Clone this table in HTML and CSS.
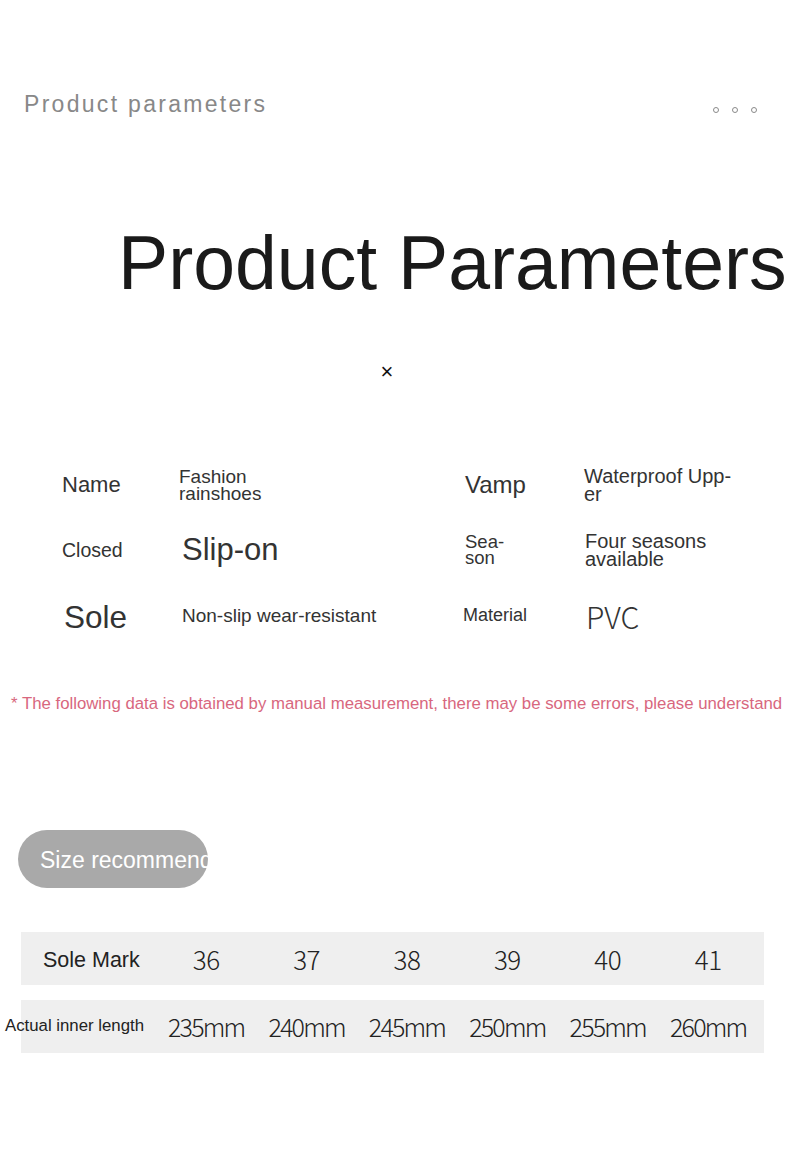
FILE: index.html
```html
<!DOCTYPE html>
<html>
<head>
<meta charset="utf-8">
<link rel="stylesheet" href="styles.css">
</head>
<body>
<div class="page">
  <header class="top">
    <div class="subtitle">Product parameters</div>
    <div class="dots"><span class="dot"></span><span class="dot"></span><span class="dot"></span></div>
  </header>

  <h1 class="title">Product Parameters</h1>

  <div class="close">×</div>

  <div class="params">
    <div class="cell k name">Name</div>
    <div class="cell v tight fashion">Fashion<br>rainshoes</div>
    <div class="cell k vamp">Vamp</div>
    <div class="cell v tight water">Waterproof Upp-<br>er</div>

    <div class="cell k closed">Closed</div>
    <div class="cell v slip">Slip-on</div>
    <div class="cell k tight season">Sea-<br>son</div>
    <div class="cell v tight four">Four seasons<br>available</div>

    <div class="cell k sole">Sole</div>
    <div class="cell v nonslip">Non-slip wear-resistant</div>
    <div class="cell k material">Material</div>
    <div class="cell v pvc">PVC</div>
  </div>

  <p class="note">* The following data is obtained by manual measurement, there may be some errors, please understand</p>

  <div class="pill"><span class="pill-text">Size recommendation</span></div>

  <div class="sizes">
    <div class="row">
      <div class="label mark">Sole Mark</div>
      <div class="num">36</div><div class="num">37</div><div class="num">38</div>
      <div class="num">39</div><div class="num">40</div><div class="num">41</div>
    </div>
    <div class="row">
      <div class="label inner">Actual inner length</div>
      <div class="num mm">235mm</div><div class="num mm">240mm</div><div class="num mm">245mm</div>
      <div class="num mm">250mm</div><div class="num mm">255mm</div><div class="num mm">260mm</div>
    </div>
  </div>
</div>
</body>
</html>
```

FILE: styles.css
```css
html, body {
  margin: 0;
  padding: 0;
  background: #ffffff;
}
.page {
  width: 790px;
  height: 1152px;
  overflow: hidden;
  font-family: "Liberation Sans", Arial, sans-serif;
  color: #333333;
}
.top {
  display: flex;
  justify-content: space-between;
  align-items: center;
  padding: 90px 33px 0 24px;
}
.subtitle {
  font-size: 23px;
  letter-spacing: 2.3px;
  color: #888888;
  line-height: 28px;
}
.dots {
  display: flex;
  gap: 13px;
  padding-top: 12px;
}
.dot {
  width: 4px;
  height: 4px;
  border: 1px solid #8a8a8a;
  border-radius: 50%;
}
.title {
  margin: 0;
  padding: 102px 0 0 118px;
  font-size: 75.2px;
  font-weight: normal;
  line-height: 86px;
  color: #1a1a1a;
  white-space: nowrap;
}
.close {
  margin-top: 55px;
  text-align: center;
  font-size: 22px;
  line-height: 22px;
  color: #111;
  padding-right: 16px;
}
.params {
  margin-top: 69px;
  display: grid;
  grid-template-columns: 117px 284px 120px 1fr;
  grid-auto-rows: 65.5px;
  padding-left: 62px;
  align-items: center;
}
.cell { white-space: nowrap; }
.tight { line-height: 0.9; }
.name { font-size: 22px; }
.fashion { font-size: 19px; }
.vamp { font-size: 24px; padding-left: 2px; }
.water { font-size: 20px; padding-left: 1px; }
.closed { font-size: 19.5px; }
.slip { font-size: 31px; padding-left: 3px; }
.season { font-size: 18.5px; padding-left: 2px; }
.four { font-size: 20px; padding-left: 2px; }
.sole { font-size: 31.5px; padding-left: 2px; padding-top: 4px; }
.nonslip { font-size: 19px; padding-left: 3px; }
.material { font-size: 18px; }
.pvc {
  font-family: "Noto Sans CJK SC", "Noto Sans", sans-serif;
  font-weight: 300;
  font-size: 30px;
  padding-left: 3px;
  color: #333;
}
.note {
  margin: 45px 0 0 11px;
  font-size: 16.8px;
  line-height: 20px;
  color: #d8677e;
  white-space: nowrap;
}
.pill {
  margin: 116px 0 0 18px;
  width: 190px;
  height: 58px;
  border-radius: 29px;
  background: #a9a9a9;
  display: flex;
  align-items: center;
  padding-left: 22px;
  box-sizing: border-box;
}
.pill-text {
  color: #ffffff;
  font-size: 23px;
  white-space: nowrap;
  padding-top: 3px;
}
.sizes {
  margin: 44px 0 0 21px;
  width: 743px;
  display: flex;
  flex-direction: column;
  gap: 15px;
}
.row {
  height: 53px;
  background: #efefef;
  display: grid;
  grid-template-columns: 135px repeat(6, 100.4px);
  align-items: center;
}
.label {
  color: #222;
  white-space: nowrap;
}
.mark { font-size: 21.5px; padding-left: 22px; padding-top: 4px; }
.inner { font-size: 16.8px; margin-left: -16px; }
.num {
  font-family: "Noto Sans CJK SC", "Noto Sans", sans-serif;
  font-weight: 300;
  font-size: 26px;
  color: #222;
  text-align: center;
  letter-spacing: -0.5px;
}
.num.mm {
  font-size: 25px;
  letter-spacing: -1.8px;
}
```
